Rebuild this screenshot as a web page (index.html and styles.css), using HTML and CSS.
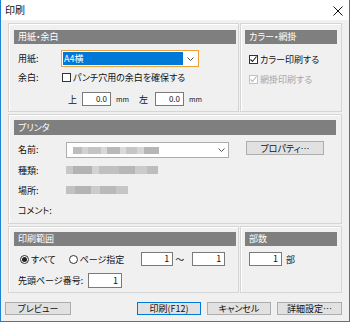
FILE: index.html
```html
<!DOCTYPE html>
<html lang="ja">
<head>
<meta charset="utf-8">
<title>印刷</title>
<link rel="stylesheet" href="styles.css">
</head>
<body>
<div class="window">
  <div class="titlebar">
    <span class="title">印刷</span>
    <svg class="close" width="10" height="10" viewBox="0 0 10 10"><path d="M0.5 0.5 L9.5 9.5 M9.5 0.5 L0.5 9.5" stroke="#111" stroke-width="1" fill="none"/></svg>
  </div>
  <div class="body">
    <div class="row">
      <div class="group g-paper">
        <div class="ghead">用紙・余白</div>
        <div class="line l-paper">
          <span class="lbl">用紙:</span>
          <div class="select focus">
            <span class="sel-hl">A4横</span>
            <svg class="chev" width="7" height="4" viewBox="0 0 7 4"><polyline points="0.5,0.5 3.5,3.5 6.5,0.5" stroke="#555" fill="none"/></svg>
          </div>
        </div>
        <div class="line l-punch">
          <span class="lbl">余白:</span>
          <span class="check"><span class="box"></span><span>パンチ穴用の余白を確保する</span></span>
        </div>
        <div class="line l-mm">
          <span class="side">上</span>
          <span class="input w29 mm-in1 small">0.0</span>
          <span class="unit">mm</span>
          <span class="side side2">左</span>
          <span class="input w29 mm-in2 small">0.0</span>
          <span class="unit">mm</span>
        </div>
      </div>
      <div class="group g-color">
        <div class="ghead">カラー・網掛</div>
        <div class="line l-c1">
          <span class="check"><span class="box checked"><svg width="9" height="9" viewBox="0 0 9 9"><polyline points="1.5,4.5 3.5,6.5 7.5,1.5" stroke="#222" stroke-width="1.1" fill="none"/></svg></span><span>カラー印刷する</span></span>
        </div>
        <div class="line l-c2">
          <span class="check disabled"><span class="box checked"><svg width="9" height="9" viewBox="0 0 9 9"><polyline points="1.5,4.5 3.5,6.5 7.5,1.5" stroke="#b5b5b5" stroke-width="1.1" fill="none"/></svg></span><span>網掛印刷する</span></span>
        </div>
      </div>
    </div>

    <div class="group g-printer">
      <div class="ghead">プリンタ</div>
      <div class="line l-name">
        <span class="lbl">名前:</span>
        <div class="select pselect">
          <span class="blur blur-name"></span>
          <svg class="chev" width="7" height="4" viewBox="0 0 7 4"><polyline points="0.5,0.5 3.5,3.5 6.5,0.5" stroke="#555" fill="none"/></svg>
        </div>
        <span class="btn b-prop">プロパティ…</span>
      </div>
      <div class="line l-info"><span class="lbl">種類:</span><span class="blur blur-type"></span></div>
      <div class="line l-info"><span class="lbl">場所:</span><span class="blur blur-loc"></span></div>
      <div class="line l-info"><span class="lbl">コメント:</span></div>
    </div>

    <div class="row row2">
      <div class="group g-range">
        <div class="ghead">印刷範囲</div>
        <div class="line l-radio">
          <span class="radio on"><span class="dot"></span></span><span class="rtext">すべて</span>
          <span class="radio r2"></span><span class="rtext">ページ指定</span>
          <span class="input w32 rin1">1</span>
          <span class="tilde">～</span>
          <span class="input w33 rin2">1</span>
        </div>
        <div class="line l-first">
          <span class="lbl lbl-first">先頭ページ番号:</span>
          <span class="input w34 tall">1</span>
        </div>
      </div>
      <div class="group g-copies">
        <div class="ghead">部数</div>
        <div class="line l-copies">
          <span class="input w33">1</span>
          <span class="bu">部</span>
        </div>
      </div>
    </div>

    <div class="buttons">
      <span class="btn b-preview">プレビュー</span>
      <span class="btn b-print">印刷(F12)</span>
      <span class="btn b-cancel">キャンセル</span>
      <span class="btn b-detail">詳細設定…</span>
    </div>
  </div>
</div>
</body>
</html>
```

FILE: styles.css
```css
* { box-sizing: border-box; }
html, body { margin: 0; padding: 0; }
body {
  width: 350px;
  height: 322px;
  overflow: hidden;
  background: #fff;
  font-family: "Noto Sans CJK JP", "Noto Sans", sans-serif;
  font-size: 9px;
  font-feature-settings: "palt";
  color: #111;
}
.window {
  width: 350px;
  height: 322px;
  border: 1px solid #1c84d6;
  border-top: none;
  background: #f0f0f0;
  display: flex;
  flex-direction: column;
}
.titlebar {
  height: 20px;
  flex: none;
  background: #fff;
  display: flex;
  align-items: center;
  justify-content: space-between;
  padding: 0 6px 0 4px;
}
.title { font-size: 10px; line-height: 1; margin-top: -1px; }
.close { margin-top: 1px; }

.body {
  flex: 1;
  display: flex;
  flex-direction: column;
  padding: 3px 7px 0 7px;
}
.row { display: flex; gap: 1px; }
.row2 { margin-top: 2px; }

.group {
  border: 1px solid #d5d5d5;
  box-shadow: inset 1px 1px 0 #fff;
  display: flex;
  flex-direction: column;
  padding: 0 5px;
}
.ghead {
  height: 14px;
  flex: none;
  background: #7f7f7f;
  color: #fff;
  line-height: 14px;
  padding-left: 4px;
  margin-top: 6px;
}
.line { display: flex; align-items: center; flex: none; }
.lbl { flex: none; }

/* paper group */
.g-paper { width: 231px; height: 89px; padding: 0 2px 0 5px; }
.g-paper .lbl { width: 47px; padding-left: 4px; }
.l-paper { height: 17px; margin-top: 6px; }
.select {
  display: flex;
  align-items: center;
  justify-content: space-between;
  background: #fff;
  border: 1px solid #adadad;
}
.select.focus { width: 138px; height: 17px; border-color: #efa23a; padding: 1px 4px 1px 1px; }
.sel-hl {
  width: 120px;
  height: 13px;
  background: #0078d7;
  color: #fff;
  line-height: 13px;
  padding-left: 1px;
}
.chev { flex: none; }
.l-punch { height: 14px; margin-top: 3px; }
.l-punch .check { margin-left: 1px; }
.check { display: flex; align-items: center; gap: 2px; }
.box {
  width: 9px;
  height: 9px;
  border: 1px solid #333;
  background: #fff;
  flex: none;
  position: relative;
}
.box svg { position: absolute; left: -1px; top: -1px; }
.check.disabled { color: #a6a6a6; }
.check.disabled .box { border-color: #c2c2c2; }
.l-mm { height: 14px; margin-top: 8px; padding-left: 54px; }
.side { width: 9px; }
.input {
  display: inline-block;
  height: 14px;
  background: #fff;
  border: 1px solid #7a7a7a;
  text-align: right;
  line-height: 12px;
  padding-right: 3px;
  flex: none;
}
.input.small { font-size: 8px; }
.w29 { width: 29px; }
.w32 { width: 32px; }
.w33 { width: 33px; }
.w34 { width: 34px; }
.tall { height: 15px; line-height: 13px; }
.mm-in1 { margin-left: 5px; }
.unit { font-size: 7px; margin-left: 5px; width: 12px; }
.side2 { margin-left: 11px; }
.mm-in2 { margin-left: 7px; }

/* color group */
.g-color { flex: 1; height: 89px; padding: 0 4px; }
.l-c1 { height: 14px; margin-top: 8px; padding-left: 4px; }
.l-c2 { height: 14px; margin-top: 6px; padding-left: 4px; }

/* printer group */
.g-printer { height: 110px; margin-top: 2px; padding: 0 5px; }
.g-printer .ghead { height: 15px; line-height: 15px; margin-top: 5px; }
.g-printer .lbl { width: 52px; padding-left: 4px; }
.l-name { height: 16px; margin-top: 7px; align-items: flex-start; }
.l-name .lbl { line-height: 16px; }
.pselect { width: 163px; height: 16px; padding: 0 3px 0 6px; }
.btn {
  display: inline-flex;
  align-items: center;
  justify-content: center;
  background: #e1e1e1;
  border: 1px solid #adadad;
  flex: none;
  line-height: 1;
}
.b-prop { width: 78px; height: 14px; margin-left: 17px; margin-top: -1px; }
.l-info { height: 20px; }
.l-name + .l-info { margin-top: 2px; }
.blur { display: block; height: 7px; }
.blur-name {
  width: 86px;
  background: linear-gradient(90deg, #bdbdbd 0 10%, #d2d2d2 10% 18%, #c4c4c4 18% 32%, #d8d8d8 32% 40%, #b9b9b9 40% 55%, #dadada 55% 62%, #c6c6c6 62% 75%, #d6d6d6 75% 82%, #b6b6b6 82% 100%);
}
.blur-type {
  width: 92px;
  height: 8px;
  background: linear-gradient(90deg, #c7c7c7 0 8%, #b3b3b3 8% 28%, #d3d3d3 28% 36%, #c0c0c0 36% 58%, #b7b7b7 58% 75%, #cbcbcb 75% 88%, #bdbdbd 88% 100%);
}
.blur-loc {
  width: 62px;
  height: 8px;
  background: linear-gradient(90deg, #c1c1c1 0 15%, #b4b4b4 15% 40%, #cccccc 40% 55%, #b9b9b9 55% 80%, #c6c6c6 80% 100%);
}

/* range group */
.g-range { width: 231px; height: 67px; padding: 0 2px 0 5px; }
.g-range .ghead { margin-top: 5px; }
.l-radio { height: 14px; margin-top: 6px; padding-left: 6px; }
.radio {
  width: 9px;
  height: 9px;
  border: 1px solid #333;
  border-radius: 50%;
  background: #fff;
  flex: none;
  display: flex;
  align-items: center;
  justify-content: center;
}
.dot { width: 5px; height: 5px; border-radius: 50%; background: #222; }
.rtext { margin-left: 2px; }
.r2 { margin-left: 13px; }
.rin1 { margin-left: 17px; }
.tilde { margin-left: 2px; width: 17px; }
.l-first { height: 15px; margin-top: 7px; padding-left: 4px; }
.lbl-first { width: 70px; }

/* copies group */
.g-copies { flex: 1; height: 67px; padding: 0 4px; }
.g-copies .ghead { margin-top: 5px; }
.l-copies { height: 14px; margin-top: 6px; padding-left: 4px; }
.bu { margin-left: 4px; }

/* buttons */
.buttons {
  display: flex;
  height: 13px;
  margin-top: 9px;
  margin-left: -3px;
  gap: 6px;
}
.buttons .btn { height: 13px; }
.b-preview { width: 66px; }
.b-print { width: 64px; margin-left: auto; border-color: #0078d7; }
.b-cancel { width: 64px; }
.b-detail { width: 65px; }
```
